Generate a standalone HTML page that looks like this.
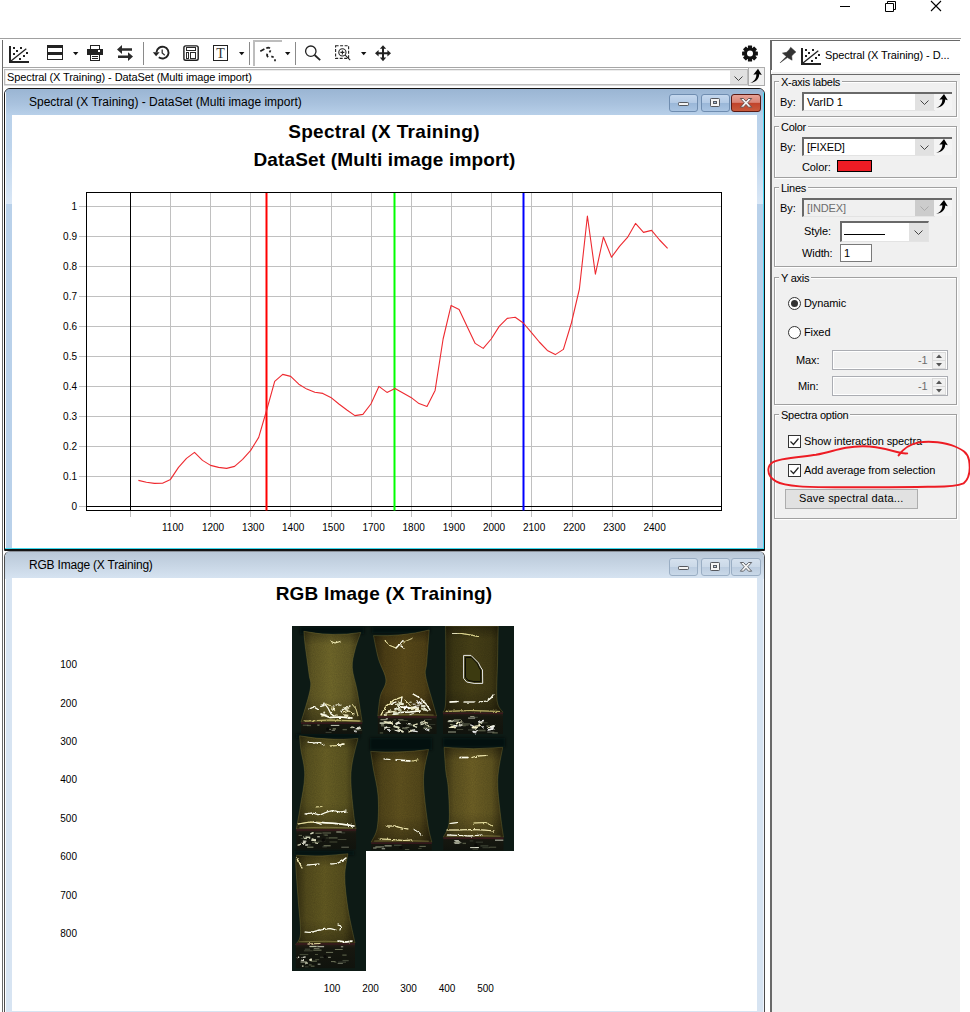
<!DOCTYPE html>
<html lang="en"><head><meta charset="utf-8"><title>Spectral (X Training) - DataSet (Multi image import)</title>
<style>
*{box-sizing:border-box;margin:0;padding:0}
html,body{width:970px;height:1012px;overflow:hidden;background:#fff}
body{position:relative;font-family:"Liberation Sans",sans-serif;font-size:11px;color:#000}
.a{position:absolute}
.t{position:absolute;white-space:nowrap;line-height:12px;font-size:11px;letter-spacing:-0.1px}
.win{position:absolute;left:4px;width:761px;border:1px solid #1c1c1c;border-radius:6px 6px 0 0;overflow:hidden}
.cap{position:absolute;left:0;top:0;right:0;height:27px}
.wt{position:absolute;left:24px;top:6px;font-size:12px;white-space:nowrap;line-height:14px}
.wb{position:absolute;top:5px;width:29px;height:18px;border-radius:3px}
.content{position:absolute;left:7px;top:26px;width:745px;background:#fff}
.grp{position:absolute;left:774px;width:183px;border:1px solid #a0a0a0;box-shadow:1px 1px 0 #fff, inset 1px 1px 0 #fff}
.gl{position:absolute;left:4px;top:-6px;background:#f0f0f0;padding:0 2px;white-space:nowrap;line-height:12px;font-size:11px;letter-spacing:-0.25px}
.cb{position:absolute;border-top:2px solid #696969;border-left:2px solid #696969;border-bottom:1px solid #e3e3e3;border-right:1px solid #e3e3e3;background:#fff}
.cbb{position:absolute;background:#e1e1e1}
.ab{position:absolute;width:18px;background:#f4f4f4}
.sp{position:absolute;left:832px;width:116px;height:20px;border:1px solid #abadb3;background:#f0f0f0;box-shadow:inset 0 0 0 1px #fff}
.chk{position:absolute;left:788px;width:13px;height:13px;border:1px solid #333;background:#fff}
.ct{font-family:"Liberation Sans",sans-serif;font-size:10px;fill:#000}
</style></head><body>
<!-- ===== application frame / window controls ===== -->
<div class="a" style="left:0;top:38px;width:961px;height:1px;background:#a0a0a0"></div>
<div class="a" style="left:2px;top:40px;width:1px;height:972px;background:#696969"></div>
<svg class="a" style="left:830px;top:0" width="130" height="16" viewBox="830 0 130 16">
<path d="M840 6.5h10" stroke="#000" stroke-width="1" fill="none"/>
<path d="M885.5 3.5h8v8h-8zM887.5 3.5v-2h8v8h-2" stroke="#000" stroke-width="1" fill="none"/>
<path d="M931 1l10 10M941 1l-10 10" stroke="#000" stroke-width="1.1" fill="none"/>
</svg>

<!-- ===== toolbar ===== -->
<svg class="a" style="left:0;top:40px" width="770" height="28" viewBox="0 40 770 28" fill="none">
<!-- scatter icon -->
<g fill="#222">
<rect x="9" y="46" width="2" height="17"/><rect x="9" y="61" width="20" height="2"/>
<rect x="13" y="47" width="2" height="2"/><rect x="20" y="47" width="2" height="2"/><rect x="16" y="50" width="2" height="2"/>
<rect x="13" y="53" width="2" height="2"/><rect x="26" y="52" width="2" height="2"/><rect x="23" y="55" width="2" height="2"/><rect x="19" y="58" width="2" height="2"/>
</g>
<path d="M11 61L26.3 48.7" stroke="#222" stroke-width="1.3"/>
<!-- rows icon -->
<rect x="47.5" y="45.5" width="15" height="14" stroke="#222" stroke-width="1"/>
<rect x="47" y="45" width="16" height="3" fill="#222"/><rect x="47" y="52" width="16" height="3" fill="#222"/>
<path d="M73 52h5.4l-2.7 3.2z" fill="#111"/>
<!-- printer -->
<rect x="90.5" y="45.5" width="9" height="5" stroke="#222" fill="#fff"/>
<rect x="87" y="49" width="16" height="6" fill="#222"/><rect x="98" y="50" width="2" height="2" fill="#fff"/>
<rect x="90.5" y="54.5" width="9" height="6" stroke="#222" fill="#fff"/>
<path d="M92 56.5h6M92 58.5h6" stroke="#222" stroke-width="1"/>
<!-- swap -->
<path d="M117 49.400l5-4.400v3.200h10v2.500h-10v3.200z" fill="#2b2b2b"/>
<path d="M133 56.600l-5-4.400v3.200h-10v2.500h10v3.200z" fill="#2b2b2b"/>
<path d="M143.5 42v23" stroke="#8a8a8a"/>
<!-- history -->
<path d="M156.500 52.300a6 5.900 0 1 1 2.300 5" stroke="#222" stroke-width="1.900"/>
<path d="M152.800 52.200h6.800l-3.500 4z" fill="#222"/>
<path d="M162.200 49.400v3.500l2.600 2.300" stroke="#333" stroke-width="1.300"/>
<!-- layout -->
<rect x="183.900" y="45.900" width="14.300" height="14.300" rx="1.800" stroke="#1c1c1c" stroke-width="1.400" fill="#fff"/>
<g shape-rendering="crispEdges" stroke="#2a2a2a" stroke-width="1" fill="#fff"><rect x="186.500" y="47.500" width="9" height="3"/><rect x="186.500" y="52.500" width="2" height="6"/><rect x="190.500" y="52.500" width="5" height="6"/></g>
<!-- T -->
<rect x="213.5" y="45.5" width="14" height="15" stroke="#222"/>
<text x="220.6" y="58" text-anchor="middle" font-family="Liberation Serif, serif" font-size="14" fill="#333">T</text>
<path d="M239 52h5.4l-2.7 3.2z" fill="#111"/>
<path d="M249.5 42v23" stroke="#8a8a8a"/>
<!-- pressed lasso button -->
<path d="M254 66V41h28" stroke="#bdbdbd" stroke-width="2"/>
<path d="M260.300 51.200L264.400 49M266.300 48.400Q268.300 46.900 269.900 48.400M270.600 50.400L269.500 52.400M267.400 53.700Q266.300 55.500 268.200 57M271.300 56.400L273.700 57.300M275 59.300v1.900" stroke="#1e1e1e" stroke-width="1.700" stroke-linecap="butt" fill="none"/>
<path d="M285 52h5.4l-2.7 3.2z" fill="#111"/>
<path d="M295.5 42v23" stroke="#8a8a8a"/>
<!-- magnifier -->
<circle cx="310.8" cy="51.2" r="5.2" stroke="#222" stroke-width="1.3"/>
<path d="M314.6 55l5.6 5.2" stroke="#222" stroke-width="1.8"/>
<!-- zoom rect -->
<rect x="335.6" y="45.8" width="13" height="12.6" stroke="#222" stroke-width="1.1" stroke-dasharray="3 1.5"/>
<circle cx="342.4" cy="52.4" r="3.6" stroke="#222" stroke-width="1.1"/>
<path d="M340.4 52.4h4M342.4 50.4v4M345.2 55.2l5 5" stroke="#222" stroke-width="1.1"/>
<path d="M361 52h5.4l-2.7 3.2z" fill="#111"/>
<!-- move -->
<path d="M383 45.2l3.2 3.6h-2.2v3.4h3.4v-2.2l3.6 3.2l-3.6 3.2v-2.2h-3.4v3.4h2.2l-3.2 3.6l-3.2-3.6h2.2v-3.4h-3.4v2.2l-3.6-3.2l3.6-3.2v2.2h3.4v-3.4h-2.2z" fill="#222"/>
<!-- gear -->
<g transform="translate(750 53.500)">
<circle r="6" fill="#111"/>
<g fill="#111"><rect x="-2.100" y="-7.900" width="4.200" height="15.800" rx="0.500"/><rect x="-2.100" y="-7.900" width="4.200" height="15.800" rx="0.500" transform="rotate(45)"/><rect x="-2.100" y="-7.900" width="4.200" height="15.800" rx="0.500" transform="rotate(90)"/><rect x="-2.100" y="-7.900" width="4.200" height="15.800" rx="0.500" transform="rotate(135)"/></g>
<circle r="3" fill="#fff"/>
</g>
</svg>

<!-- ===== plot selector combo ===== -->
<div class="a" style="left:3px;top:67px;width:762px;height:1px;background:#a6a6a6"></div>
<div class="a" style="left:4px;top:69px;width:744px;height:16px;border:1px solid #bcbcbc;box-shadow:inset 1px 1px 0 #ececec;background:#fff"></div>
<div class="a" style="left:4px;top:85px;width:744px;height:1px;background:#dcdcdc"></div>
<div class="t" style="left:7px;top:71px">Spectral (X Training) - DataSet (Multi image import)</div>
<div class="a" style="left:730px;top:70px;width:17px;height:14px;background:#e1e1e1"></div>
<svg class="a" style="left:730px;top:70px" width="17" height="14" viewBox="0 0 17 14"><path d="M4.500 6.500l4 4l4-4" stroke="#444" stroke-width="1" fill="none"/></svg>
<div class="a" style="left:748px;top:67px;width:17px;height:19px;border:1px solid #adadad;background:#f0f0f0"></div>
<svg class="a" style="left:749px;top:68px" width="14" height="16" viewBox="0 0 14 16"><path d="M1 15c4.500-1.500 6.500-5 6.300-8.800L4.300 6.800L9 .8L12.800 7L10.200 6.300C10.200 11 6.500 14.600 1 15z" fill="#000"/></svg>
<!-- ===== MDI child window 1 (active) ===== -->
<div class="win" style="top:88px;height:463px;background:#b9d1ea;border-color:#151515">
  <div class="cap" style="background:linear-gradient(#9ab5d3,#a9c2de 55%,#b9d1ea)"></div>
  <div class="a" style="left:0;top:3px;width:1px;height:458px;background:#fff"></div>
  <div class="a" style="right:0;top:3px;width:1px;height:456px;background:#46d9f7"></div>
  <div class="a" style="left:1px;top:26px;width:6px;height:89px;background:linear-gradient(#b9d1ea,#bdd4ec 35%,#d9e7f6)"></div>
  <div class="a" style="right:1px;top:26px;width:6px;height:89px;background:linear-gradient(#b9d1ea,#bdd4ec 35%,#d9e7f6)"></div>
  <div class="wt">Spectral (X Training) - DataSet (Multi image import)</div>
  <div class="wb" style="left:664px;border:1px solid #6f8db0;background:linear-gradient(#c5d8ee 0,#b3cae5 48%,#9ab7d8 52%,#a9c4e2 100%)"></div>
  <div class="wb" style="left:696px;border:1px solid #6f8db0;background:linear-gradient(#c5d8ee 0,#b3cae5 48%,#9ab7d8 52%,#a9c4e2 100%)"></div>
  <div class="wb" style="left:726px;width:30px;border:1px solid #5a1a14;background:linear-gradient(#e7a397 0,#d98476 46%,#c1432b 52%,#c85a3c 100%)"></div>
  <svg class="a" style="left:664px;top:5px" width="92" height="18" viewBox="0 0 92 18">
    <rect x="9.500" y="8.500" width="10" height="3" rx="0.8" fill="#f4f4f4" stroke="#55585e" stroke-width="1"/>
    <rect x="41.500" y="4.500" width="9" height="8" rx="0.8" fill="#f4f4f4" stroke="#55585e"/><rect x="44.500" y="7.500" width="3" height="2" fill="#9fb8d6" stroke="#55585e"/>
    <path d="M71.300 4.500h3.200l2.500 2.700l2.500-2.700h3.200l-4 4.300l4 4.400h-3.200l-2.500-2.800l-2.500 2.800h-3.200l4-4.400z" fill="#f8f8f8" stroke="#5b4a48" stroke-width="0.9"/>
  </svg>
  <div class="content" style="height:433px"></div>
  <div class="a" style="left:0;top:459px;width:759px;height:1px;background:#3fd9ee"></div>
  <div class="a" style="left:0;top:460px;width:759px;height:1px;background:#111"></div>
</div>

<!-- ===== MDI child window 2 (inactive) ===== -->
<div class="win" style="top:551px;height:470px;background:#d7e4f2;border-color:#4c4c4c;border-top-color:#8a9099">
  <div class="a" style="left:0;top:3px;width:1px;height:470px;background:#fff"></div>
  <div class="a" style="right:0;top:3px;width:1px;height:470px;background:#eef3fb"></div>
  <div class="cap" style="background:linear-gradient(#b9c8d8,#c9d7e6 55%,#d7e4f2)"></div>
  <div class="wt" style="top:6px;letter-spacing:-0.2px">RGB Image (X Training)</div>
  <div class="wb" style="left:664px;top:6px;border:1px solid #9aaec4;background:linear-gradient(#d5e1ee 0,#cbd9e8 48%,#bccde0 52%,#c9d8e8 100%)"></div>
  <div class="wb" style="left:696px;top:6px;border:1px solid #9aaec4;background:linear-gradient(#d5e1ee 0,#cbd9e8 48%,#bccde0 52%,#c9d8e8 100%)"></div>
  <div class="wb" style="left:726px;top:6px;width:30px;border:1px solid #9aaec4;background:linear-gradient(#d5e1ee 0,#cbd9e8 48%,#bccde0 52%,#c9d8e8 100%)"></div>
  <svg class="a" style="left:664px;top:6px" width="92" height="18" viewBox="0 0 92 18">
    <rect x="9.500" y="8.500" width="10" height="3" rx="0.8" fill="#f4f4f4" stroke="#55585e" stroke-width="1"/>
    <rect x="41.500" y="4.500" width="9" height="8" rx="0.8" fill="#f4f4f4" stroke="#55585e"/><rect x="44.500" y="7.500" width="3" height="2" fill="#c3d2e2" stroke="#55585e"/>
    <path d="M71.300 4.500h3.200l2.500 2.700l2.500-2.700h3.200l-4 4.300l4 4.400h-3.200l-2.500-2.800l-2.500 2.800h-3.200l4-4.400z" fill="#f8f8f8" stroke="#55585e" stroke-width="0.9"/>
  </svg>
  <div class="content" style="top:26px;height:433px"></div>
</div>
<svg class="a" style="left:12px;top:115px" width="745" height="433" viewBox="12 115 745 433">
<g stroke="#c0c0c0" stroke-width="1" shape-rendering="crispEdges">
<path d="M79 206.5H721"/>
<path d="M79 236.5H721"/>
<path d="M79 266.5H721"/>
<path d="M79 296.5H721"/>
<path d="M79 326.5H721"/>
<path d="M79 356.5H721"/>
<path d="M79 386.5H721"/>
<path d="M79 416.5H721"/>
<path d="M79 446.5H721"/>
<path d="M79 476.5H721"/>
<path d="M79 506.5H86"/>
<path d="M170.5 193V517"/>
<path d="M210.5 193V517"/>
<path d="M250.5 193V517"/>
<path d="M290.5 193V517"/>
<path d="M331.5 193V517"/>
<path d="M371.5 193V517"/>
<path d="M411.5 193V517"/>
<path d="M451.5 193V517"/>
<path d="M491.5 193V517"/>
<path d="M531.5 193V517"/>
<path d="M572.5 193V517"/>
<path d="M612.5 193V517"/>
<path d="M652.5 193V517"/>
<path d="M130.5 511V517"/>
</g>
<g stroke="#000" stroke-width="1" fill="none" shape-rendering="crispEdges">
<rect x="86.5" y="192.5" width="635" height="318"/>
<path d="M86 506.5H722M130.5 192V511"/>
</g>
<g stroke-width="2" fill="none"><path d="M266.5 193V510.5" stroke="#ff0000"/><path d="M394.5 193V510.5" stroke="#00ff00"/><path d="M523.5 193V510.5" stroke="#0000ff"/></g>
<polyline points="138.4,480.4 146.4,482.2 154.4,483.4 162.5,483.2 170.5,479.4 178.5,467.4 186.5,458.4 194.5,452.4 202.5,460.4 210.6,465.4 218.6,467.4 226.6,468.4 234.6,466.4 242.6,459.4 250.7,450.4 258.7,437.4 266.7,410.0 274.7,381.4 282.7,374.4 290.7,376.4 298.8,384.2 306.8,389.1 314.8,392.3 322.8,393.4 330.8,397.4 338.9,404.0 346.9,410.0 354.9,415.6 362.9,414.4 370.9,404.0 378.9,386.4 387.0,392.4 395.0,388.4 403.0,393.0 411.0,397.4 419.0,403.6 427.0,406.4 435.1,390.4 443.1,339.0 451.1,305.4 459.1,309.4 467.1,326.6 475.2,343.4 483.2,348.4 491.2,339.0 499.2,326.4 507.2,318.4 515.2,317.2 523.3,323.0 531.3,332.4 539.3,342.0 547.3,350.4 555.3,354.6 563.4,349.4 571.4,323.0 579.4,289.0 587.4,216.0 595.4,274.2 603.4,237.0 611.5,257.2 619.5,246.4 627.5,237.4 635.5,223.4 643.5,232.4 651.6,230.4 659.6,240.0 667.6,248.4" fill="none" stroke="#ee2a30" stroke-width="1.1" stroke-linejoin="round"/>
<text x="384" y="138.4" text-anchor="middle" font-family="Liberation Sans, sans-serif" font-weight="bold" font-size="19" letter-spacing="0.33">Spectral (X Training)</text>
<text x="384.5" y="166" text-anchor="middle" font-family="Liberation Sans, sans-serif" font-weight="bold" font-size="19" letter-spacing="0.16">DataSet (Multi image import)</text>
<text class="ct" x="77" y="210.1" text-anchor="end">1</text>
<text class="ct" x="77" y="240.1" text-anchor="end">0.9</text>
<text class="ct" x="77" y="270.1" text-anchor="end">0.8</text>
<text class="ct" x="77" y="300.1" text-anchor="end">0.7</text>
<text class="ct" x="77" y="330.1" text-anchor="end">0.6</text>
<text class="ct" x="77" y="360.1" text-anchor="end">0.5</text>
<text class="ct" x="77" y="390.1" text-anchor="end">0.4</text>
<text class="ct" x="77" y="420.1" text-anchor="end">0.3</text>
<text class="ct" x="77" y="450.1" text-anchor="end">0.2</text>
<text class="ct" x="77" y="480.1" text-anchor="end">0.1</text>
<text class="ct" x="77" y="510.1" text-anchor="end">0</text>
<text class="ct" x="172.8" y="531" text-anchor="middle">1100</text>
<text class="ct" x="213.0" y="531" text-anchor="middle">1200</text>
<text class="ct" x="253.1" y="531" text-anchor="middle">1300</text>
<text class="ct" x="293.2" y="531" text-anchor="middle">1400</text>
<text class="ct" x="333.4" y="531" text-anchor="middle">1500</text>
<text class="ct" x="373.6" y="531" text-anchor="middle">1700</text>
<text class="ct" x="413.7" y="531" text-anchor="middle">1800</text>
<text class="ct" x="453.9" y="531" text-anchor="middle">1900</text>
<text class="ct" x="494.0" y="531" text-anchor="middle">2000</text>
<text class="ct" x="534.1" y="531" text-anchor="middle">2100</text>
<text class="ct" x="574.3" y="531" text-anchor="middle">2200</text>
<text class="ct" x="614.4" y="531" text-anchor="middle">2300</text>
<text class="ct" x="654.6" y="531" text-anchor="middle">2400</text>
</svg>
<!-- ===== RGB image plot text ===== -->
<svg class="a" style="left:12px;top:578px" width="745" height="433" viewBox="12 578 745 433">
<text x="384" y="600" text-anchor="middle" font-family="Liberation Sans, sans-serif" font-weight="bold" font-size="19" letter-spacing="0.2">RGB Image (X Training)</text>
<text class="ct" x="77" y="668" text-anchor="end">100</text>
<text class="ct" x="77" y="706.500" text-anchor="end">200</text>
<text class="ct" x="77" y="745" text-anchor="end">300</text>
<text class="ct" x="77" y="783.300" text-anchor="end">400</text>
<text class="ct" x="77" y="821.700" text-anchor="end">500</text>
<text class="ct" x="77" y="860.200" text-anchor="end">600</text>
<text class="ct" x="77" y="898.600" text-anchor="end">700</text>
<text class="ct" x="77" y="937" text-anchor="end">800</text>
<text class="ct" x="332" y="991.600" text-anchor="middle">100</text>
<text class="ct" x="370.500" y="991.600" text-anchor="middle">200</text>
<text class="ct" x="408.500" y="991.600" text-anchor="middle">300</text>
<text class="ct" x="447" y="991.600" text-anchor="middle">400</text>
<text class="ct" x="485.500" y="991.600" text-anchor="middle">500</text>
</svg>
<svg class="a" style="left:292px;top:626px" width="222" height="345" viewBox="292 626 222 345">
<defs>
<linearGradient id="ga" x1="0" x2="1" y1="0" y2="0"><stop offset="0" stop-color="#2e2a0e"/><stop offset=".18" stop-color="#514a1b"/><stop offset=".48" stop-color="#625a24"/><stop offset=".8" stop-color="#544d1c"/><stop offset="1" stop-color="#2c280d"/></linearGradient>
<linearGradient id="gb" x1="0" x2="1" y1="0" y2="0"><stop offset="0" stop-color="#2e260c"/><stop offset=".18" stop-color="#4e4116"/><stop offset=".5" stop-color="#5b4c1a"/><stop offset=".82" stop-color="#4c3f15"/><stop offset="1" stop-color="#2b2109"/></linearGradient>
<linearGradient id="gs" x1="0" x2="0" y1="0" y2="1"><stop offset="0" stop-color="#2c2018"/><stop offset=".2" stop-color="#16170f"/><stop offset="1" stop-color="#10130d"/></linearGradient>
<linearGradient id="gv" x1="0" x2="0" y1="0" y2="1"><stop offset="0" stop-color="#000" stop-opacity=".32"/><stop offset=".15" stop-color="#000" stop-opacity="0"/><stop offset=".72" stop-color="#000" stop-opacity="0"/><stop offset=".86" stop-color="#000" stop-opacity=".14"/><stop offset="1" stop-color="#000" stop-opacity=".3"/></linearGradient>
<filter id="nz" x="0" y="0" width="100%" height="100%"><feTurbulence type="fractalNoise" baseFrequency="0.9" numOctaves="2" seed="3" result="n"/><feColorMatrix type="matrix" values="0 0 0 0 0  0 0 0 0 0  0 0 0 0 0  0 0 0 .35 -.05"/><feComposite in2="SourceGraphic" operator="in"/></filter>
<filter id="bl" x="-10%" y="-60%" width="120%" height="220%"><feGaussianBlur stdDeviation="1.6"/></filter>
<filter id="rg" x="0" y="0" width="100%" height="100%"><feTurbulence type="fractalNoise" baseFrequency="0.35" numOctaves="2" seed="5" result="t"/><feDisplacementMap in="SourceGraphic" in2="t" scale="2.6" xChannelSelector="R" yChannelSelector="G" result="d"/><feGaussianBlur in="d" stdDeviation="0.7" result="g0"/><feComponentTransfer in="g0" result="g"><feFuncA type="linear" slope="0.6"/></feComponentTransfer><feMerge><feMergeNode in="g"/><feMergeNode in="d"/></feMerge></filter>
</defs>
<path d="M292 626H514V851H366V971H292z" fill="#0d1a15"/>
<rect x="300" y="627" width="64" height="7" fill="#040907" opacity=".75" filter="url(#bl)"/>
<rect x="372" y="627" width="58" height="6" fill="#040907" opacity=".75" filter="url(#bl)"/>
<rect x="296" y="734" width="64" height="4" fill="#040907" opacity=".75" filter="url(#bl)"/>
<rect x="370" y="738" width="62" height="12" fill="#040907" opacity=".75" filter="url(#bl)"/>
<rect x="443" y="738" width="62" height="9" fill="#040907" opacity=".75" filter="url(#bl)"/>
<rect x="294" y="851" width="60" height="4" fill="#040907" opacity=".75" filter="url(#bl)"/>
<defs><linearGradient id="g0" x1="0" x2="1" y1="0" y2="0"><stop offset="0" stop-color="#393516"/><stop offset=".18" stop-color="#605824"/><stop offset=".48" stop-color="#72692b"/><stop offset=".8" stop-color="#635b26"/><stop offset="1" stop-color="#363114"/></linearGradient><linearGradient id="g1" x1="0" x2="1" y1="0" y2="0"><stop offset="0" stop-color="#2e260d"/><stop offset=".18" stop-color="#4d3f16"/><stop offset=".48" stop-color="#5b4b1a"/><stop offset=".8" stop-color="#504217"/><stop offset="1" stop-color="#2b230c"/></linearGradient><linearGradient id="g2" x1="0" x2="1" y1="0" y2="0"><stop offset="0" stop-color="#25210c"/><stop offset=".18" stop-color="#3d3814"/><stop offset=".48" stop-color="#494218"/><stop offset=".8" stop-color="#403a15"/><stop offset="1" stop-color="#221f0b"/></linearGradient><linearGradient id="g3" x1="0" x2="1" y1="0" y2="0"><stop offset="0" stop-color="#353113"/><stop offset=".18" stop-color="#595220"/><stop offset=".48" stop-color="#6a6126"/><stop offset=".8" stop-color="#5c5521"/><stop offset="1" stop-color="#322e12"/></linearGradient><linearGradient id="g4" x1="0" x2="1" y1="0" y2="0"><stop offset="0" stop-color="#312a0f"/><stop offset=".18" stop-color="#52461a"/><stop offset=".48" stop-color="#61531f"/><stop offset=".8" stop-color="#55491b"/><stop offset="1" stop-color="#2e270f"/></linearGradient><linearGradient id="g5" x1="0" x2="1" y1="0" y2="0"><stop offset="0" stop-color="#373113"/><stop offset=".18" stop-color="#5d5220"/><stop offset=".48" stop-color="#6f6126"/><stop offset=".8" stop-color="#605521"/><stop offset="1" stop-color="#342e12"/></linearGradient><linearGradient id="g6" x1="0" x2="1" y1="0" y2="0"><stop offset="0" stop-color="#322d11"/><stop offset=".18" stop-color="#544c1d"/><stop offset=".48" stop-color="#635a22"/><stop offset=".8" stop-color="#574f1e"/><stop offset="1" stop-color="#2f2a10"/></linearGradient></defs>
<path d="M303.8 631.3Q332.2 636.9 360.7 632.5C359.8 635.4 356.4 644.1 355.0 650.0C353.6 655.9 351.9 660.9 352.3 667.8C352.7 674.7 355.7 682.2 357.3 691.3C358.9 700.4 361.4 717.1 362.2 722.2L301.0 722.2C302.6 716.6 309.0 696.8 310.3 688.8C311.6 680.8 309.8 681.0 309.0 674.0C308.2 667.0 306.2 653.8 305.3 646.7C304.4 639.6 304.1 633.9 303.8 631.3z" fill="url(#g0)"/>
<path d="M303.8 631.3Q332.2 636.9 360.7 632.5C359.8 635.4 356.4 644.1 355.0 650.0C353.6 655.9 351.9 660.9 352.3 667.8C352.7 674.7 355.7 682.2 357.3 691.3C358.9 700.4 361.4 717.1 362.2 722.2L301.0 722.2C302.6 716.6 309.0 696.8 310.3 688.8C311.6 680.8 309.8 681.0 309.0 674.0C308.2 667.0 306.2 653.8 305.3 646.7C304.4 639.6 304.1 633.9 303.8 631.3z" fill="url(#gv)"/>
<path d="M303.8 631.3Q332.2 636.9 360.7 632.5C359.8 635.4 356.4 644.1 355.0 650.0C353.6 655.9 351.9 660.9 352.3 667.8C352.7 674.7 355.7 682.2 357.3 691.3C358.9 700.4 361.4 717.1 362.2 722.2L301.0 722.2C302.6 716.6 309.0 696.8 310.3 688.8C311.6 680.8 309.8 681.0 309.0 674.0C308.2 667.0 306.2 653.8 305.3 646.7C304.4 639.6 304.1 633.9 303.8 631.3z" fill="#000" filter="url(#nz)" opacity=".5"/>
<path d="M303.8 631.3Q332.2 636.9 360.7 632.5C359.8 635.4 356.4 644.1 355.0 650.0C353.6 655.9 351.9 660.9 352.3 667.8C352.7 674.7 355.7 682.2 357.3 691.3C358.9 700.4 361.4 717.1 362.2 722.2L301.0 722.2C302.6 716.6 309.0 696.8 310.3 688.8C311.6 680.8 309.8 681.0 309.0 674.0C308.2 667.0 306.2 653.8 305.3 646.7C304.4 639.6 304.1 633.9 303.8 631.3z" fill="none" stroke="#8f8540" stroke-width="0.7" opacity=".45"/>
<rect x="301.0" y="722.2" width="61.2" height="11.8" fill="url(#gs)"/>
<path d="M301.0 723.2H362.2" stroke="#4a1622" stroke-width="0.9" opacity=".9"/>
<path d="M325.6 732.4h5.9" stroke="#4a5040" stroke-width="1" opacity="0.73"/>
<path d="M332.7 728.9h3.3" stroke="#8a9070" stroke-width="1.3" opacity="0.86"/>
<path d="M306.9 725.5h4.1" stroke="#8a9070" stroke-width="1.3" opacity="0.52"/>
<path d="M353.3 730.1h8.8" stroke="#5a6048" stroke-width="1.3" opacity="0.57"/>
<path d="M302.8 725.2h5.7" stroke="#7e8468" stroke-width="0.8" opacity="0.77"/>
<path d="M342.6 729.6h4.3" stroke="#7e8468" stroke-width="1.3" opacity="0.61"/>
<path d="M317.4 725.4h2.0" stroke="#8a9070" stroke-width="1" opacity="0.68"/>
<path d="M330.8 725.4h8.5" stroke="#e8ead8" stroke-width="1" opacity="0.84"/>
<path d="M328.8 729.4h2.2" stroke="#c8ccb0" stroke-width="1" opacity="0.55"/>
<path d="M317.2 724.8h2.5" stroke="#8a9070" stroke-width="0.8" opacity="0.60"/>
<path d="M350.4 727.8h2.4" stroke="#8a9070" stroke-width="1" opacity="0.69"/>
<path d="M331.6 730.3h3.4" stroke="#e8ead8" stroke-width="0.8" opacity="0.64"/>
<circle cx="327.7" cy="729.1" r="1.6" fill="#0a0a08"/>
<path d="M304.0 721.0Q331.6 719.8 359.2 721.2" stroke="#cfc678" stroke-width="0.8" fill="none" opacity=".45"/>
<path d="M373.5 635.6Q401.4 636.8 429.2 630.0C428.8 635.5 427.3 655.3 426.7 662.8C426.1 670.3 424.7 669.2 425.5 675.2C426.3 681.2 429.8 691.9 431.7 698.7C433.6 705.5 435.8 713.1 436.6 716.0L377.8 716.0C378.2 712.7 379.0 702.2 380.3 696.2C381.6 690.2 386.2 686.2 385.9 680.0C385.6 673.8 380.6 666.4 378.5 659.0C376.4 651.6 374.3 639.5 373.5 635.6z" fill="url(#g1)"/>
<path d="M373.5 635.6Q401.4 636.8 429.2 630.0C428.8 635.5 427.3 655.3 426.7 662.8C426.1 670.3 424.7 669.2 425.5 675.2C426.3 681.2 429.8 691.9 431.7 698.7C433.6 705.5 435.8 713.1 436.6 716.0L377.8 716.0C378.2 712.7 379.0 702.2 380.3 696.2C381.6 690.2 386.2 686.2 385.9 680.0C385.6 673.8 380.6 666.4 378.5 659.0C376.4 651.6 374.3 639.5 373.5 635.6z" fill="url(#gv)"/>
<path d="M373.5 635.6Q401.4 636.8 429.2 630.0C428.8 635.5 427.3 655.3 426.7 662.8C426.1 670.3 424.7 669.2 425.5 675.2C426.3 681.2 429.8 691.9 431.7 698.7C433.6 705.5 435.8 713.1 436.6 716.0L377.8 716.0C378.2 712.7 379.0 702.2 380.3 696.2C381.6 690.2 386.2 686.2 385.9 680.0C385.6 673.8 380.6 666.4 378.5 659.0C376.4 651.6 374.3 639.5 373.5 635.6z" fill="#000" filter="url(#nz)" opacity=".5"/>
<path d="M373.5 635.6Q401.4 636.8 429.2 630.0C428.8 635.5 427.3 655.3 426.7 662.8C426.1 670.3 424.7 669.2 425.5 675.2C426.3 681.2 429.8 691.9 431.7 698.7C433.6 705.5 435.8 713.1 436.6 716.0L377.8 716.0C378.2 712.7 379.0 702.2 380.3 696.2C381.6 690.2 386.2 686.2 385.9 680.0C385.6 673.8 380.6 666.4 378.5 659.0C376.4 651.6 374.3 639.5 373.5 635.6z" fill="none" stroke="#8f8540" stroke-width="0.7" opacity=".45"/>
<rect x="377.8" y="716.0" width="58.8" height="18.0" fill="url(#gs)"/>
<path d="M377.8 717.0H436.6" stroke="#4a1622" stroke-width="0.9" opacity=".9"/>
<path d="M399.2 720.5h8.5" stroke="#8a9070" stroke-width="0.8" opacity="0.50"/>
<path d="M402.0 728.4h5.4" stroke="#7e8468" stroke-width="1" opacity="0.73"/>
<path d="M427.9 724.6h7.4" stroke="#4a5040" stroke-width="0.8" opacity="0.68"/>
<path d="M428.1 731.0h2.0" stroke="#5a6048" stroke-width="1" opacity="0.95"/>
<path d="M379.8 732.9h3.3" stroke="#5a6048" stroke-width="1.3" opacity="0.76"/>
<path d="M380.9 724.9h3.0" stroke="#c8ccb0" stroke-width="1.3" opacity="0.65"/>
<path d="M393.6 719.8h2.5" stroke="#5a6048" stroke-width="1.3" opacity="0.61"/>
<path d="M408.7 725.1h4.6" stroke="#5a6048" stroke-width="1" opacity="0.87"/>
<path d="M385.6 727.6h4.7" stroke="#e8ead8" stroke-width="0.8" opacity="0.87"/>
<path d="M391.2 729.2h3.3" stroke="#5a6048" stroke-width="0.8" opacity="0.81"/>
<path d="M398.1 719.6h5.4" stroke="#c8ccb0" stroke-width="0.8" opacity="0.55"/>
<path d="M404.3 729.2h3.8" stroke="#4a5040" stroke-width="1" opacity="0.69"/>
<path d="M423.9 726.0h5.4" stroke="#8a9070" stroke-width="0.8" opacity="0.56"/>
<path d="M402.7 727.4h6.6" stroke="#c8ccb0" stroke-width="1" opacity="0.60"/>
<path d="M424.4 719.5h7.2" stroke="#4a5040" stroke-width="1" opacity="0.61"/>
<path d="M381.1 726.2h4.0" stroke="#7e8468" stroke-width="0.8" opacity="0.66"/>
<path d="M423.2 728.0h8.9" stroke="#8a9070" stroke-width="1.3" opacity="0.76"/>
<path d="M385.8 718.8h2.2" stroke="#e8ead8" stroke-width="1.3" opacity="0.64"/>
<path d="M380.5 719.6h6.2" stroke="#c8ccb0" stroke-width="1.3" opacity="0.64"/>
<circle cx="404.3" cy="726.0" r="1.6" fill="#0a0a08"/>
<path d="M380.8 714.8Q407.2 713.6 433.6 715.0" stroke="#cfc678" stroke-width="0.8" fill="none" opacity=".45"/>
<path d="M445.6 626.0Q471.9 626.0 498.2 626.0C498.1 631.7 497.8 647.7 497.6 660.0C497.4 672.3 496.1 691.3 497.0 700.0C497.9 708.7 502.0 710.2 503.0 712.3L443.0 712.3C443.4 710.8 445.1 711.7 445.6 703.0C446.1 694.3 445.8 672.8 445.8 660.0C445.8 647.2 445.6 631.7 445.6 626.0z" fill="url(#g2)"/>
<path d="M445.6 626.0Q471.9 626.0 498.2 626.0C498.1 631.7 497.8 647.7 497.6 660.0C497.4 672.3 496.1 691.3 497.0 700.0C497.9 708.7 502.0 710.2 503.0 712.3L443.0 712.3C443.4 710.8 445.1 711.7 445.6 703.0C446.1 694.3 445.8 672.8 445.8 660.0C445.8 647.2 445.6 631.7 445.6 626.0z" fill="url(#gv)"/>
<path d="M445.6 626.0Q471.9 626.0 498.2 626.0C498.1 631.7 497.8 647.7 497.6 660.0C497.4 672.3 496.1 691.3 497.0 700.0C497.9 708.7 502.0 710.2 503.0 712.3L443.0 712.3C443.4 710.8 445.1 711.7 445.6 703.0C446.1 694.3 445.8 672.8 445.8 660.0C445.8 647.2 445.6 631.7 445.6 626.0z" fill="#000" filter="url(#nz)" opacity=".5"/>
<path d="M445.6 626.0Q471.9 626.0 498.2 626.0C498.1 631.7 497.8 647.7 497.6 660.0C497.4 672.3 496.1 691.3 497.0 700.0C497.9 708.7 502.0 710.2 503.0 712.3L443.0 712.3C443.4 710.8 445.1 711.7 445.6 703.0C446.1 694.3 445.8 672.8 445.8 660.0C445.8 647.2 445.6 631.7 445.6 626.0z" fill="none" stroke="#8f8540" stroke-width="0.7" opacity=".45"/>
<rect x="443.0" y="712.3" width="60.0" height="21.7" fill="url(#gs)"/>
<path d="M443.0 713.3H503.0" stroke="#4a1622" stroke-width="0.9" opacity=".9"/>
<path d="M447.7 721.5h5.2" stroke="#c8ccb0" stroke-width="1.3" opacity="0.83"/>
<path d="M450.6 721.0h8.7" stroke="#c8ccb0" stroke-width="1.3" opacity="0.71"/>
<path d="M448.0 732.0h8.0" stroke="#c8ccb0" stroke-width="1" opacity="0.76"/>
<path d="M475.9 725.4h4.7" stroke="#5a6048" stroke-width="0.8" opacity="0.54"/>
<path d="M476.6 730.8h9.0" stroke="#8a9070" stroke-width="1" opacity="0.67"/>
<path d="M481.5 722.8h6.1" stroke="#5a6048" stroke-width="0.8" opacity="0.73"/>
<path d="M470.2 716.4h4.2" stroke="#c8ccb0" stroke-width="0.8" opacity="0.93"/>
<path d="M449.8 726.8h7.5" stroke="#4a5040" stroke-width="1" opacity="0.90"/>
<path d="M462.8 725.9h3.0" stroke="#5a6048" stroke-width="0.8" opacity="0.84"/>
<path d="M461.5 723.9h8.5" stroke="#7e8468" stroke-width="1" opacity="0.68"/>
<path d="M456.8 729.4h6.4" stroke="#7e8468" stroke-width="0.8" opacity="0.67"/>
<path d="M473.7 717.3h4.2" stroke="#4a5040" stroke-width="1" opacity="0.88"/>
<path d="M487.3 732.1h7.0" stroke="#e8ead8" stroke-width="0.8" opacity="0.55"/>
<path d="M468.0 729.9h8.5" stroke="#4a5040" stroke-width="1.3" opacity="0.73"/>
<path d="M478.3 730.1h7.0" stroke="#5a6048" stroke-width="1" opacity="0.64"/>
<path d="M486.3 725.9h3.9" stroke="#8a9070" stroke-width="1.3" opacity="0.63"/>
<path d="M462.1 725.1h6.5" stroke="#8a9070" stroke-width="0.8" opacity="0.68"/>
<path d="M453.7 719.6h7.4" stroke="#7e8468" stroke-width="0.8" opacity="0.94"/>
<path d="M449.9 724.5h2.8" stroke="#8a9070" stroke-width="1" opacity="0.93"/>
<path d="M478.9 723.4h3.4" stroke="#7e8468" stroke-width="1.3" opacity="0.50"/>
<path d="M468.1 718.1h7.0" stroke="#e8ead8" stroke-width="1" opacity="0.74"/>
<path d="M492.3 732.9h5.5" stroke="#7e8468" stroke-width="1" opacity="0.88"/>
<path d="M479.7 722.3h3.6" stroke="#8a9070" stroke-width="1" opacity="0.56"/>
<circle cx="472.6" cy="724.1" r="1.6" fill="#0a0a08"/>
<path d="M446.0 711.1Q473.0 709.9 500.0 711.3" stroke="#cfc678" stroke-width="0.8" fill="none" opacity=".45"/>
<path d="M299.6 735.8Q328.8 741.1 358.0 738.4C356.8 744.1 351.8 760.1 351.0 772.4C350.2 784.7 352.6 802.8 353.5 812.2C354.4 821.6 355.7 826.2 356.1 829.0L296.4 829.0C297.0 825.3 298.8 816.0 300.2 807.0C301.6 798.0 304.6 784.6 304.7 775.0C304.8 765.4 301.6 755.8 300.8 749.3C300.0 742.8 299.8 738.0 299.6 735.8z" fill="url(#g3)"/>
<path d="M299.6 735.8Q328.8 741.1 358.0 738.4C356.8 744.1 351.8 760.1 351.0 772.4C350.2 784.7 352.6 802.8 353.5 812.2C354.4 821.6 355.7 826.2 356.1 829.0L296.4 829.0C297.0 825.3 298.8 816.0 300.2 807.0C301.6 798.0 304.6 784.6 304.7 775.0C304.8 765.4 301.6 755.8 300.8 749.3C300.0 742.8 299.8 738.0 299.6 735.8z" fill="url(#gv)"/>
<path d="M299.6 735.8Q328.8 741.1 358.0 738.4C356.8 744.1 351.8 760.1 351.0 772.4C350.2 784.7 352.6 802.8 353.5 812.2C354.4 821.6 355.7 826.2 356.1 829.0L296.4 829.0C297.0 825.3 298.8 816.0 300.2 807.0C301.6 798.0 304.6 784.6 304.7 775.0C304.8 765.4 301.6 755.8 300.8 749.3C300.0 742.8 299.8 738.0 299.6 735.8z" fill="#000" filter="url(#nz)" opacity=".5"/>
<path d="M299.6 735.8Q328.8 741.1 358.0 738.4C356.8 744.1 351.8 760.1 351.0 772.4C350.2 784.7 352.6 802.8 353.5 812.2C354.4 821.6 355.7 826.2 356.1 829.0L296.4 829.0C297.0 825.3 298.8 816.0 300.2 807.0C301.6 798.0 304.6 784.6 304.7 775.0C304.8 765.4 301.6 755.8 300.8 749.3C300.0 742.8 299.8 738.0 299.6 735.8z" fill="none" stroke="#8f8540" stroke-width="0.7" opacity=".45"/>
<rect x="296.4" y="829.0" width="59.7" height="20.5" fill="url(#gs)"/>
<path d="M296.4 830.0H356.1" stroke="#4a1622" stroke-width="0.9" opacity=".9"/>
<path d="M329.1 837.9h8.4" stroke="#5a6048" stroke-width="1.3" opacity="0.90"/>
<path d="M337.8 839.4h8.6" stroke="#8a9070" stroke-width="0.8" opacity="0.54"/>
<path d="M341.3 847.2h7.6" stroke="#c8ccb0" stroke-width="0.8" opacity="0.61"/>
<path d="M317.2 836.8h2.6" stroke="#e8ead8" stroke-width="1" opacity="0.91"/>
<path d="M340.8 832.9h4.4" stroke="#4a5040" stroke-width="1" opacity="0.75"/>
<path d="M336.3 832.0h5.4" stroke="#c8ccb0" stroke-width="1" opacity="0.86"/>
<path d="M306.2 844.9h4.3" stroke="#7e8468" stroke-width="1" opacity="0.57"/>
<path d="M323.6 845.8h7.1" stroke="#8a9070" stroke-width="1" opacity="0.93"/>
<path d="M322.4 833.0h8.6" stroke="#7e8468" stroke-width="1" opacity="0.74"/>
<path d="M312.1 842.4h7.1" stroke="#5a6048" stroke-width="1.3" opacity="0.88"/>
<path d="M325.8 838.0h4.2" stroke="#5a6048" stroke-width="0.8" opacity="0.64"/>
<path d="M304.6 836.1h5.8" stroke="#4a5040" stroke-width="0.8" opacity="0.68"/>
<path d="M303.2 837.9h2.0" stroke="#5a6048" stroke-width="0.8" opacity="0.73"/>
<path d="M317.7 841.1h7.6" stroke="#4a5040" stroke-width="0.8" opacity="0.81"/>
<path d="M300.7 838.5h5.8" stroke="#4a5040" stroke-width="1" opacity="0.61"/>
<path d="M322.4 846.8h4.4" stroke="#4a5040" stroke-width="1.3" opacity="0.64"/>
<path d="M307.1 847.2h6.3" stroke="#7e8468" stroke-width="1.3" opacity="0.85"/>
<path d="M298.6 835.4h3.4" stroke="#8a9070" stroke-width="1" opacity="0.64"/>
<path d="M315.4 833.3h6.3" stroke="#8a9070" stroke-width="1.3" opacity="0.56"/>
<path d="M323.3 834.9h3.8" stroke="#5a6048" stroke-width="1" opacity="0.51"/>
<path d="M329.5 842.0h7.8" stroke="#5a6048" stroke-width="0.8" opacity="0.89"/>
<path d="M324.5 835.2h3.5" stroke="#5a6048" stroke-width="1.3" opacity="0.76"/>
<circle cx="323.3" cy="840.2" r="1.6" fill="#0a0a08"/>
<path d="M299.4 827.8Q326.2 826.6 353.1 828.0" stroke="#cfc678" stroke-width="0.8" fill="none" opacity=".45"/>
<path d="M370.7 751.4Q399.6 753.5 428.5 749.5C427.7 754.5 423.6 767.4 423.5 779.5C423.4 791.6 426.2 811.9 427.6 822.4C429.0 832.9 431.1 838.9 431.8 842.2L371.2 842.2C372.2 839.7 376.1 835.0 377.3 827.3C378.5 819.6 378.8 805.9 378.1 796.0C377.4 786.1 374.4 775.4 373.2 768.0C372.0 760.6 371.1 754.2 370.7 751.4z" fill="url(#g4)"/>
<path d="M370.7 751.4Q399.6 753.5 428.5 749.5C427.7 754.5 423.6 767.4 423.5 779.5C423.4 791.6 426.2 811.9 427.6 822.4C429.0 832.9 431.1 838.9 431.8 842.2L371.2 842.2C372.2 839.7 376.1 835.0 377.3 827.3C378.5 819.6 378.8 805.9 378.1 796.0C377.4 786.1 374.4 775.4 373.2 768.0C372.0 760.6 371.1 754.2 370.7 751.4z" fill="url(#gv)"/>
<path d="M370.7 751.4Q399.6 753.5 428.5 749.5C427.7 754.5 423.6 767.4 423.5 779.5C423.4 791.6 426.2 811.9 427.6 822.4C429.0 832.9 431.1 838.9 431.8 842.2L371.2 842.2C372.2 839.7 376.1 835.0 377.3 827.3C378.5 819.6 378.8 805.9 378.1 796.0C377.4 786.1 374.4 775.4 373.2 768.0C372.0 760.6 371.1 754.2 370.7 751.4z" fill="#000" filter="url(#nz)" opacity=".5"/>
<path d="M370.7 751.4Q399.6 753.5 428.5 749.5C427.7 754.5 423.6 767.4 423.5 779.5C423.4 791.6 426.2 811.9 427.6 822.4C429.0 832.9 431.1 838.9 431.8 842.2L371.2 842.2C372.2 839.7 376.1 835.0 377.3 827.3C378.5 819.6 378.8 805.9 378.1 796.0C377.4 786.1 374.4 775.4 373.2 768.0C372.0 760.6 371.1 754.2 370.7 751.4z" fill="none" stroke="#8f8540" stroke-width="0.7" opacity=".45"/>
<rect x="371.2" y="842.2" width="60.6" height="8.3" fill="url(#gs)"/>
<path d="M371.2 843.2H431.8" stroke="#4a1622" stroke-width="0.9" opacity=".9"/>
<path d="M419.4 846.4h6.4" stroke="#7e8468" stroke-width="1" opacity="0.77"/>
<path d="M418.2 848.4h3.4" stroke="#7e8468" stroke-width="0.8" opacity="0.56"/>
<path d="M384.6 845.9h7.1" stroke="#c8ccb0" stroke-width="1" opacity="0.87"/>
<path d="M394.0 845.3h7.5" stroke="#4a5040" stroke-width="1.3" opacity="0.81"/>
<path d="M373.1 848.0h3.4" stroke="#e8ead8" stroke-width="0.8" opacity="0.82"/>
<path d="M404.9 849.5h4.4" stroke="#7e8468" stroke-width="0.8" opacity="0.72"/>
<path d="M373.5 847.6h7.3" stroke="#5a6048" stroke-width="1" opacity="0.57"/>
<path d="M381.7 848.7h3.4" stroke="#e8ead8" stroke-width="1.3" opacity="0.54"/>
<path d="M375.4 846.9h8.7" stroke="#c8ccb0" stroke-width="1" opacity="0.68"/>
<circle cx="400.9" cy="847.4" r="1.6" fill="#0a0a08"/>
<path d="M374.2 841.0Q401.5 839.8 428.8 841.2" stroke="#cfc678" stroke-width="0.8" fill="none" opacity=".45"/>
<path d="M444.1 747.3Q473.4 750.3 502.7 747.3C501.9 752.7 498.1 768.6 497.7 779.5C497.3 790.4 499.2 802.9 500.2 812.5C501.2 822.1 502.9 833.1 503.5 837.2L443.3 837.2C444.3 834.7 448.3 830.6 449.1 822.4C449.9 814.1 448.8 796.2 448.2 787.7C447.6 779.2 446.5 777.9 445.8 771.2C445.1 764.5 444.4 751.3 444.1 747.3z" fill="url(#g5)"/>
<path d="M444.1 747.3Q473.4 750.3 502.7 747.3C501.9 752.7 498.1 768.6 497.7 779.5C497.3 790.4 499.2 802.9 500.2 812.5C501.2 822.1 502.9 833.1 503.5 837.2L443.3 837.2C444.3 834.7 448.3 830.6 449.1 822.4C449.9 814.1 448.8 796.2 448.2 787.7C447.6 779.2 446.5 777.9 445.8 771.2C445.1 764.5 444.4 751.3 444.1 747.3z" fill="url(#gv)"/>
<path d="M444.1 747.3Q473.4 750.3 502.7 747.3C501.9 752.7 498.1 768.6 497.7 779.5C497.3 790.4 499.2 802.9 500.2 812.5C501.2 822.1 502.9 833.1 503.5 837.2L443.3 837.2C444.3 834.7 448.3 830.6 449.1 822.4C449.9 814.1 448.8 796.2 448.2 787.7C447.6 779.2 446.5 777.9 445.8 771.2C445.1 764.5 444.4 751.3 444.1 747.3z" fill="#000" filter="url(#nz)" opacity=".5"/>
<path d="M444.1 747.3Q473.4 750.3 502.7 747.3C501.9 752.7 498.1 768.6 497.7 779.5C497.3 790.4 499.2 802.9 500.2 812.5C501.2 822.1 502.9 833.1 503.5 837.2L443.3 837.2C444.3 834.7 448.3 830.6 449.1 822.4C449.9 814.1 448.8 796.2 448.2 787.7C447.6 779.2 446.5 777.9 445.8 771.2C445.1 764.5 444.4 751.3 444.1 747.3z" fill="none" stroke="#8f8540" stroke-width="0.7" opacity=".45"/>
<rect x="443.3" y="837.2" width="60.2" height="13.3" fill="url(#gs)"/>
<path d="M443.3 838.2H503.5" stroke="#4a1622" stroke-width="0.9" opacity=".9"/>
<path d="M462.5 843.4h3.5" stroke="#8a9070" stroke-width="1.3" opacity="0.52"/>
<path d="M454.6 843.2h4.9" stroke="#e8ead8" stroke-width="1" opacity="0.91"/>
<path d="M475.3 847.5h2.7" stroke="#e8ead8" stroke-width="0.8" opacity="0.86"/>
<path d="M480.4 845.9h8.0" stroke="#4a5040" stroke-width="1.3" opacity="0.77"/>
<path d="M470.1 847.6h8.9" stroke="#e8ead8" stroke-width="1" opacity="0.91"/>
<path d="M482.4 847.7h7.4" stroke="#4a5040" stroke-width="0.8" opacity="0.90"/>
<path d="M489.3 847.2h6.9" stroke="#7e8468" stroke-width="1" opacity="0.59"/>
<path d="M453.8 842.7h7.6" stroke="#c8ccb0" stroke-width="0.8" opacity="0.90"/>
<path d="M495.0 840.2h8.3" stroke="#e8ead8" stroke-width="1.3" opacity="0.63"/>
<path d="M455.4 841.5h4.8" stroke="#c8ccb0" stroke-width="1" opacity="0.73"/>
<path d="M469.8 840.9h3.5" stroke="#4a5040" stroke-width="1.3" opacity="0.51"/>
<path d="M475.8 842.2h7.2" stroke="#4a5040" stroke-width="1.3" opacity="0.52"/>
<path d="M454.3 840.7h4.6" stroke="#e8ead8" stroke-width="1" opacity="0.91"/>
<path d="M472.5 849.2h5.6" stroke="#5a6048" stroke-width="0.8" opacity="0.79"/>
<circle cx="475.9" cy="844.9" r="1.6" fill="#0a0a08"/>
<path d="M446.3 836.0Q473.4 834.8 500.5 836.2" stroke="#cfc678" stroke-width="0.8" fill="none" opacity=".45"/>
<path d="M296.6 855.3Q322.2 857.5 347.9 853.7C347.4 857.5 344.8 867.5 344.8 876.6C344.8 885.7 346.2 897.1 347.9 908.2C349.6 919.3 353.8 937.2 355.0 943.0L295.8 944.5C296.6 942.7 300.1 940.9 300.5 933.5C300.9 926.1 299.0 911.6 298.2 900.3C297.4 889.0 296.1 873.0 295.8 865.5C295.5 858.0 296.5 857.0 296.6 855.3z" fill="url(#g6)"/>
<path d="M296.6 855.3Q322.2 857.5 347.9 853.7C347.4 857.5 344.8 867.5 344.8 876.6C344.8 885.7 346.2 897.1 347.9 908.2C349.6 919.3 353.8 937.2 355.0 943.0L295.8 944.5C296.6 942.7 300.1 940.9 300.5 933.5C300.9 926.1 299.0 911.6 298.2 900.3C297.4 889.0 296.1 873.0 295.8 865.5C295.5 858.0 296.5 857.0 296.6 855.3z" fill="url(#gv)"/>
<path d="M296.6 855.3Q322.2 857.5 347.9 853.7C347.4 857.5 344.8 867.5 344.8 876.6C344.8 885.7 346.2 897.1 347.9 908.2C349.6 919.3 353.8 937.2 355.0 943.0L295.8 944.5C296.6 942.7 300.1 940.9 300.5 933.5C300.9 926.1 299.0 911.6 298.2 900.3C297.4 889.0 296.1 873.0 295.8 865.5C295.5 858.0 296.5 857.0 296.6 855.3z" fill="#000" filter="url(#nz)" opacity=".5"/>
<path d="M296.6 855.3Q322.2 857.5 347.9 853.7C347.4 857.5 344.8 867.5 344.8 876.6C344.8 885.7 346.2 897.1 347.9 908.2C349.6 919.3 353.8 937.2 355.0 943.0L295.8 944.5C296.6 942.7 300.1 940.9 300.5 933.5C300.9 926.1 299.0 911.6 298.2 900.3C297.4 889.0 296.1 873.0 295.8 865.5C295.5 858.0 296.5 857.0 296.6 855.3z" fill="none" stroke="#8f8540" stroke-width="0.7" opacity=".45"/>
<rect x="295.8" y="943.0" width="59.2" height="25.2" fill="url(#gs)"/>
<path d="M295.8 944.0H355.0" stroke="#4a1622" stroke-width="0.9" opacity=".9"/>
<path d="M300.6 962.0h6.2" stroke="#c8ccb0" stroke-width="1" opacity="0.92"/>
<path d="M304.8 949.2h5.3" stroke="#4a5040" stroke-width="1.3" opacity="0.78"/>
<path d="M299.7 954.6h8.6" stroke="#5a6048" stroke-width="1" opacity="0.77"/>
<path d="M315.2 959.7h4.0" stroke="#5a6048" stroke-width="1" opacity="0.80"/>
<path d="M334.3 962.3h2.2" stroke="#5a6048" stroke-width="0.8" opacity="0.78"/>
<path d="M317.3 946.6h6.8" stroke="#e8ead8" stroke-width="1.3" opacity="0.68"/>
<path d="M326.0 952.4h7.1" stroke="#7e8468" stroke-width="1" opacity="0.82"/>
<path d="M309.4 946.5h7.3" stroke="#c8ccb0" stroke-width="1.3" opacity="0.91"/>
<path d="M304.0 950.8h8.7" stroke="#8a9070" stroke-width="0.8" opacity="0.52"/>
<path d="M317.7 964.2h2.8" stroke="#e8ead8" stroke-width="1.3" opacity="0.57"/>
<path d="M315.0 954.5h3.0" stroke="#5a6048" stroke-width="1" opacity="0.79"/>
<path d="M331.0 961.6h4.5" stroke="#7e8468" stroke-width="1" opacity="0.83"/>
<path d="M308.8 964.9h2.8" stroke="#5a6048" stroke-width="1.3" opacity="0.88"/>
<path d="M310.6 961.2h6.3" stroke="#8a9070" stroke-width="1.3" opacity="0.59"/>
<path d="M310.8 966.2h3.7" stroke="#5a6048" stroke-width="1.3" opacity="0.91"/>
<path d="M340.9 946.8h2.3" stroke="#e8ead8" stroke-width="1" opacity="0.69"/>
<path d="M328.1 957.3h2.7" stroke="#c8ccb0" stroke-width="0.8" opacity="0.91"/>
<path d="M304.9 966.8h3.6" stroke="#4a5040" stroke-width="1" opacity="0.66"/>
<path d="M313.8 948.4h5.5" stroke="#c8ccb0" stroke-width="0.8" opacity="0.70"/>
<path d="M338.1 962.2h7.9" stroke="#4a5040" stroke-width="1" opacity="0.84"/>
<path d="M316.4 948.8h3.1" stroke="#5a6048" stroke-width="1" opacity="0.63"/>
<path d="M334.9 949.5h7.8" stroke="#8a9070" stroke-width="1" opacity="0.76"/>
<path d="M320.0 957.3h4.3" stroke="#4a5040" stroke-width="1.3" opacity="0.76"/>
<path d="M337.7 963.4h5.2" stroke="#c8ccb0" stroke-width="0.8" opacity="0.64"/>
<path d="M342.5 960.6h6.2" stroke="#4a5040" stroke-width="1.3" opacity="0.84"/>
<path d="M313.3 950.2h8.2" stroke="#8a9070" stroke-width="1.3" opacity="0.65"/>
<path d="M342.3 955.1h4.3" stroke="#5a6048" stroke-width="1.3" opacity="0.91"/>
<circle cx="324.9" cy="956.6" r="1.6" fill="#0a0a08"/>
<path d="M298.8 941.8Q325.4 940.6 352.0 942.0" stroke="#cfc678" stroke-width="0.8" fill="none" opacity=".45"/>
<g filter="url(#rg)">
<path d="M331.0 641.5L335.0 643.0L340.0 641.5" stroke="#f4efb8" stroke-width="0.94" fill="none" stroke-linecap="round" stroke-linejoin="round" opacity="1"/>
<path d="M309.0 709.0L314.0 707.0L318.0 709.5" stroke="#fffff0" stroke-width="1.02" fill="none" stroke-linecap="round" stroke-linejoin="round" opacity="1"/>
<path d="M324.0 703.0L328.0 708.0L331.0 714.0L334.0 716.0" stroke="#fffff0" stroke-width="1.10" fill="none" stroke-linecap="round" stroke-linejoin="round" opacity="1"/>
<path d="M326.0 704.0L331.0 706.0L335.0 711.0" stroke="#e8e0a0" stroke-width="0.85" fill="none" stroke-linecap="round" stroke-linejoin="round" opacity="1"/>
<path d="M336.0 705.0L341.0 705.0" stroke="#fffff0" stroke-width="0.85" fill="none" stroke-linecap="round" stroke-linejoin="round" opacity="1"/>
<path d="M341.0 711.0L346.0 707.5L350.0 706.0" stroke="#fffff0" stroke-width="1.19" fill="none" stroke-linecap="round" stroke-linejoin="round" opacity="1"/>
<path d="M343.0 713.0L349.0 711.0L354.0 714.0" stroke="#f0e8b0" stroke-width="0.94" fill="none" stroke-linecap="round" stroke-linejoin="round" opacity="1"/>
<path d="M321.0 714.0L330.0 717.5L340.0 717.0L352.0 718.0" stroke="#fffff0" stroke-width="1.36" fill="none" stroke-linecap="round" stroke-linejoin="round" opacity="1"/>
<path d="M304.0 721.0L330.0 720.0L360.0 721.0" stroke="#c8be70" stroke-width="0.85" fill="none" stroke-linecap="round" stroke-linejoin="round" opacity="1"/>
<path d="M352.0 704.0L356.0 709.0L358.0 716.0" stroke="#d8d090" stroke-width="0.85" fill="none" stroke-linecap="round" stroke-linejoin="round" opacity="1"/>
<path d="M385.0 641.0L390.0 645.5L396.0 648.0" stroke="#e8dfa0" stroke-width="0.94" fill="none" stroke-linecap="round" stroke-linejoin="round" opacity="1"/>
<path d="M396.0 648.0L400.0 644.0L403.0 640.5" stroke="#fffff0" stroke-width="1.10" fill="none" stroke-linecap="round" stroke-linejoin="round" opacity="1"/>
<path d="M401.0 646.0L404.0 648.0" stroke="#fffff0" stroke-width="1.19" fill="none" stroke-linecap="round" stroke-linejoin="round" opacity="1"/>
<path d="M404.0 642.0L412.0 638.5" stroke="#d8cf90" stroke-width="0.77" fill="none" stroke-linecap="round" stroke-linejoin="round" opacity="1"/>
<path d="M381.0 715.0L386.0 706.0L394.0 700.0L402.0 697.0" stroke="#f4ecb0" stroke-width="1.02" fill="none" stroke-linecap="round" stroke-linejoin="round" opacity="1"/>
<path d="M402.0 697.0L401.0 703.0L398.0 707.0" stroke="#fffff0" stroke-width="1.02" fill="none" stroke-linecap="round" stroke-linejoin="round" opacity="1"/>
<path d="M413.0 694.0L420.0 698.0L426.0 704.0L430.0 710.0" stroke="#fffff0" stroke-width="1.10" fill="none" stroke-linecap="round" stroke-linejoin="round" opacity="1"/>
<path d="M390.0 704.0L396.0 702.0" stroke="#fffff0" stroke-width="1.02" fill="none" stroke-linecap="round" stroke-linejoin="round" opacity="1"/>
<path d="M395.0 709.0L402.0 707.0L408.0 708.5L415.0 707.0" stroke="#fffff0" stroke-width="1.53" fill="none" stroke-linecap="round" stroke-linejoin="round" opacity="1"/>
<path d="M399.0 712.5L410.0 712.0L420.0 711.0" stroke="#fffff0" stroke-width="1.70" fill="none" stroke-linecap="round" stroke-linejoin="round" opacity="1"/>
<path d="M386.0 713.0L396.0 711.0" stroke="#f0e8c0" stroke-width="1.10" fill="none" stroke-linecap="round" stroke-linejoin="round" opacity="1"/>
<path d="M424.0 708.0L428.0 711.0" stroke="#fffff0" stroke-width="1.19" fill="none" stroke-linecap="round" stroke-linejoin="round" opacity="1"/>
<path d="M405.0 700.0L409.0 704.0L412.0 708.0" stroke="#e8e0a8" stroke-width="0.85" fill="none" stroke-linecap="round" stroke-linejoin="round" opacity="1"/>
<path d="M452.0 633.0L460.0 633.2L468.0 634.5L478.0 636.5" stroke="#e0d890" stroke-width="1.02" fill="none" stroke-linecap="round" stroke-linejoin="round" opacity="1"/>
<path d="M452.0 633.0L457.0 633.0" stroke="#fffff0" stroke-width="1.02" fill="none" stroke-linecap="round" stroke-linejoin="round" opacity="1"/>
<path d="M450.0 702.0L458.0 701.5" stroke="#fffff0" stroke-width="1.27" fill="none" stroke-linecap="round" stroke-linejoin="round" opacity="1"/>
<path d="M464.0 702.0L474.0 702.0" stroke="#fffff0" stroke-width="1.19" fill="none" stroke-linecap="round" stroke-linejoin="round" opacity="1"/>
<path d="M479.0 702.0L487.0 701.0L491.0 698.0L493.0 695.0" stroke="#fffff0" stroke-width="1.19" fill="none" stroke-linecap="round" stroke-linejoin="round" opacity="1"/>
<path d="M446.0 711.5L470.0 710.5L500.0 711.5" stroke="#c8be70" stroke-width="0.77" fill="none" stroke-linecap="round" stroke-linejoin="round" opacity="1"/>
<path d="M308.0 742.0L314.0 743.0L320.0 742.5L324.0 745.0" stroke="#fffff0" stroke-width="1.02" fill="none" stroke-linecap="round" stroke-linejoin="round" opacity="1"/>
<path d="M330.0 746.0L338.0 745.5L344.0 744.0" stroke="#e8e0a0" stroke-width="1.02" fill="none" stroke-linecap="round" stroke-linejoin="round" opacity="1"/>
<path d="M338.0 745.5L344.0 744.0" stroke="#fffff0" stroke-width="1.10" fill="none" stroke-linecap="round" stroke-linejoin="round" opacity="1"/>
<path d="M305.0 814.0L312.0 813.0L320.0 815.0L327.0 812.0L333.0 810.5L340.0 812.0L346.0 811.0" stroke="#fffff0" stroke-width="1.02" fill="none" stroke-linecap="round" stroke-linejoin="round" opacity="1"/>
<path d="M316.0 807.0L322.0 806.5" stroke="#e8e0a0" stroke-width="0.77" fill="none" stroke-linecap="round" stroke-linejoin="round" opacity="1"/>
<path d="M298.0 824.0L310.0 822.0L322.0 822.5" stroke="#e8e0a0" stroke-width="1.10" fill="none" stroke-linecap="round" stroke-linejoin="round" opacity="1"/>
<path d="M322.0 822.5L336.0 823.5L348.0 825.0L354.0 826.0" stroke="#fffff0" stroke-width="1.36" fill="none" stroke-linecap="round" stroke-linejoin="round" opacity="1"/>
<path d="M314.0 822.0L322.0 824.5" stroke="#fffff0" stroke-width="1.10" fill="none" stroke-linecap="round" stroke-linejoin="round" opacity="1"/>
<path d="M384.0 759.0L390.0 759.5" stroke="#fffff0" stroke-width="0.94" fill="none" stroke-linecap="round" stroke-linejoin="round" opacity="1"/>
<path d="M396.0 760.0L404.0 760.5L410.0 761.0" stroke="#fffff0" stroke-width="1.27" fill="none" stroke-linecap="round" stroke-linejoin="round" opacity="1"/>
<path d="M412.0 761.0L418.0 760.0" stroke="#e8e0a0" stroke-width="0.85" fill="none" stroke-linecap="round" stroke-linejoin="round" opacity="1"/>
<path d="M386.0 826.0L394.0 826.0L402.0 828.0L408.0 829.0" stroke="#f0e8b0" stroke-width="1.10" fill="none" stroke-linecap="round" stroke-linejoin="round" opacity="1"/>
<path d="M414.0 829.5L418.0 832.0L422.0 835.0" stroke="#fffff0" stroke-width="0.94" fill="none" stroke-linecap="round" stroke-linejoin="round" opacity="1"/>
<path d="M380.0 839.0L392.0 839.5L404.0 840.5L412.0 840.0" stroke="#e8e0a0" stroke-width="1.02" fill="none" stroke-linecap="round" stroke-linejoin="round" opacity="1"/>
<path d="M460.0 757.5L468.0 757.5" stroke="#fffff0" stroke-width="1.27" fill="none" stroke-linecap="round" stroke-linejoin="round" opacity="1"/>
<path d="M472.0 757.5L478.0 756.0L486.0 755.5" stroke="#f0e8b0" stroke-width="1.10" fill="none" stroke-linecap="round" stroke-linejoin="round" opacity="1"/>
<path d="M450.0 823.5L458.0 822.5" stroke="#fffff0" stroke-width="1.02" fill="none" stroke-linecap="round" stroke-linejoin="round" opacity="1"/>
<path d="M474.0 823.0L486.0 822.5L492.0 826.0" stroke="#e8e0a0" stroke-width="0.94" fill="none" stroke-linecap="round" stroke-linejoin="round" opacity="1"/>
<path d="M447.0 830.0L458.0 830.0L470.0 829.5L484.0 830.0L494.0 831.0" stroke="#f0e8b0" stroke-width="1.10" fill="none" stroke-linecap="round" stroke-linejoin="round" opacity="1"/>
<path d="M448.0 835.0L460.0 835.5L470.0 836.0L482.0 835.0" stroke="#fffff0" stroke-width="1.02" fill="none" stroke-linecap="round" stroke-linejoin="round" opacity="1"/>
<path d="M296.5 858.0L299.0 862.0L302.0 868.0" stroke="#f0e8b0" stroke-width="1.02" fill="none" stroke-linecap="round" stroke-linejoin="round" opacity="1"/>
<path d="M307.0 865.0L313.0 864.5L319.0 864.0" stroke="#fffff0" stroke-width="1.10" fill="none" stroke-linecap="round" stroke-linejoin="round" opacity="1"/>
<path d="M331.0 864.0L337.0 863.5L342.0 861.0L346.0 858.0" stroke="#fffff0" stroke-width="1.19" fill="none" stroke-linecap="round" stroke-linejoin="round" opacity="1"/>
<path d="M305.0 932.0L310.0 932.5L320.0 930.0L330.0 928.5L336.0 930.0" stroke="#fffff0" stroke-width="1.02" fill="none" stroke-linecap="round" stroke-linejoin="round" opacity="1"/>
<path d="M338.0 925.0L341.0 926.0L340.0 930.0" stroke="#fffff0" stroke-width="1.02" fill="none" stroke-linecap="round" stroke-linejoin="round" opacity="1"/>
<path d="M308.0 944.0L320.0 943.5" stroke="#e8e0a0" stroke-width="0.85" fill="none" stroke-linecap="round" stroke-linejoin="round" opacity="1"/>
<path d="M338.0 941.0L346.0 942.0L352.0 941.0" stroke="#fffff0" stroke-width="1.27" fill="none" stroke-linecap="round" stroke-linejoin="round" opacity="1"/>
<rect x="344.9" y="707.6" width="2.5" height="1.4" fill="#fbf7d0" opacity="0.74" transform="rotate(22 346.1 708.3)"/>
<rect x="331.6" y="708.4" width="2.6" height="1.4" fill="#f4f4e4" opacity="0.91" transform="rotate(-6 332.9 709.1)"/>
<rect x="332.1" y="708.6" width="2.0" height="1.6" fill="#ffffff" opacity="0.92" transform="rotate(-16 333.0 709.5)"/>
<rect x="347.6" y="707.2" width="1.6" height="1.5" fill="#fbf7d0" opacity="0.75" transform="rotate(2 348.4 707.9)"/>
<rect x="321.3" y="715.0" width="2.8" height="1.6" fill="#fbf7d0" opacity="0.68" transform="rotate(-10 322.7 715.8)"/>
<rect x="322.4" y="713.9" width="4.2" height="0.9" fill="#f4f4e4" opacity="0.68" transform="rotate(7 324.5 714.3)"/>
<rect x="344.7" y="709.2" width="3.6" height="1.5" fill="#e6e6c8" opacity="0.92" transform="rotate(20 346.5 709.9)"/>
<rect x="331.6" y="707.9" width="4.4" height="1.7" fill="#fbf7d0" opacity="0.93" transform="rotate(-0 333.8 708.7)"/>
<rect x="323.4" y="711.7" width="1.6" height="1.9" fill="#e6e6c8" opacity="0.95" transform="rotate(24 324.2 712.7)"/>
<rect x="344.1" y="714.6" width="4.2" height="2.1" fill="#fbf7d0" opacity="0.78" transform="rotate(7 346.2 715.7)"/>
<rect x="320.2" y="704.5" width="4.3" height="2.1" fill="#f4f4e4" opacity="1.00" transform="rotate(-13 322.3 705.5)"/>
<rect x="332.2" y="705.6" width="2.1" height="1.4" fill="#ffffff" opacity="0.82" transform="rotate(-10 333.3 706.3)"/>
<rect x="342.9" y="707.2" width="2.0" height="2.1" fill="#d8dcc0" opacity="0.66" transform="rotate(21 343.9 708.2)"/>
<rect x="335.2" y="714.7" width="2.4" height="1.1" fill="#fbf7d0" opacity="0.73" transform="rotate(-7 336.4 715.2)"/>
<rect x="415.5" y="708.6" width="2.9" height="1.1" fill="#f4f4e4" opacity="0.97" transform="rotate(-11 417.0 709.1)"/>
<rect x="421.1" y="708.7" width="5.8" height="1.6" fill="#d8dcc0" opacity="0.96" transform="rotate(18 424.0 709.5)"/>
<rect x="421.2" y="705.0" width="4.2" height="2.1" fill="#f4f4e4" opacity="0.79" transform="rotate(-1 423.3 706.1)"/>
<rect x="398.4" y="702.5" width="5.2" height="2.2" fill="#e6e6c8" opacity="0.93" transform="rotate(15 401.0 703.6)"/>
<rect x="393.1" y="712.1" width="5.6" height="2.0" fill="#d8dcc0" opacity="0.93" transform="rotate(20 395.9 713.1)"/>
<rect x="415.5" y="708.8" width="2.6" height="1.0" fill="#e6e6c8" opacity="0.97" transform="rotate(-9 416.8 709.3)"/>
<rect x="417.4" y="702.7" width="5.0" height="1.7" fill="#ffffff" opacity="0.70" transform="rotate(1 419.9 703.6)"/>
<rect x="416.0" y="701.0" width="5.3" height="2.0" fill="#ffffff" opacity="0.77" transform="rotate(16 418.7 702.0)"/>
<rect x="410.9" y="707.4" width="5.6" height="1.8" fill="#fbf7d0" opacity="0.84" transform="rotate(-21 413.7 708.3)"/>
<rect x="408.8" y="701.7" width="2.8" height="1.1" fill="#d8dcc0" opacity="0.72" transform="rotate(9 410.2 702.2)"/>
<rect x="410.1" y="707.3" width="2.6" height="2.0" fill="#e6e6c8" opacity="0.79" transform="rotate(-9 411.4 708.3)"/>
<rect x="409.5" y="713.5" width="4.7" height="0.9" fill="#f4f4e4" opacity="0.69" transform="rotate(-21 411.8 714.0)"/>
<rect x="403.7" y="706.6" width="5.9" height="2.0" fill="#ffffff" opacity="0.95" transform="rotate(8 406.6 707.5)"/>
<rect x="415.2" y="707.2" width="3.2" height="1.0" fill="#f4f4e4" opacity="0.97" transform="rotate(14 416.8 707.7)"/>
<rect x="396.0" y="708.6" width="5.7" height="1.8" fill="#d8dcc0" opacity="0.84" transform="rotate(23 398.9 709.5)"/>
<rect x="395.0" y="703.8" width="3.5" height="1.0" fill="#e6e6c8" opacity="0.85" transform="rotate(-10 396.8 704.3)"/>
<rect x="414.5" y="705.5" width="5.3" height="0.9" fill="#ffffff" opacity="0.70" transform="rotate(-18 417.2 706.0)"/>
<rect x="412.8" y="703.7" width="2.8" height="0.9" fill="#ffffff" opacity="0.69" transform="rotate(-2 414.2 704.2)"/>
<rect x="393.2" y="712.9" width="3.7" height="1.9" fill="#d8dcc0" opacity="0.97" transform="rotate(-8 395.0 713.8)"/>
<rect x="397.2" y="703.6" width="2.6" height="1.8" fill="#d8dcc0" opacity="0.87" transform="rotate(-1 398.4 704.5)"/>
<rect x="415.6" y="708.4" width="3.3" height="1.9" fill="#fbf7d0" opacity="0.84" transform="rotate(-13 417.3 709.4)"/>
<rect x="400.7" y="703.6" width="3.2" height="1.4" fill="#f4f4e4" opacity="0.83" transform="rotate(3 402.3 704.3)"/>
<rect x="393.4" y="713.3" width="3.3" height="1.0" fill="#e6e6c8" opacity="0.84" transform="rotate(13 395.0 713.8)"/>
<rect x="388.0" y="710.6" width="1.9" height="1.8" fill="#fbf7d0" opacity="1.00" transform="rotate(24 388.9 711.5)"/>
<rect x="392.3" y="714.1" width="3.2" height="0.8" fill="#ffffff" opacity="0.70" transform="rotate(8 393.9 714.6)"/>
<rect x="389.4" y="710.5" width="2.5" height="0.9" fill="#e6e6c8" opacity="0.81" transform="rotate(19 390.7 710.9)"/>
<rect x="384.8" y="713.8" width="1.9" height="2.1" fill="#fbf7d0" opacity="0.67" transform="rotate(2 385.7 714.8)"/>
<rect x="357.1" y="727.0" width="3.4" height="2.1" fill="#f4f4e4" opacity="0.69" transform="rotate(-8 358.8 728.0)"/>
<rect x="355.7" y="728.2" width="3.7" height="1.1" fill="#f4f4e4" opacity="0.71" transform="rotate(4 357.5 728.7)"/>
<rect x="352.9" y="726.9" width="1.6" height="1.1" fill="#f4f4e4" opacity="0.76" transform="rotate(24 353.7 727.5)"/>
<rect x="354.2" y="730.6" width="2.5" height="1.6" fill="#ffffff" opacity="0.71" transform="rotate(15 355.4 731.4)"/>
<rect x="350.4" y="726.7" width="2.8" height="1.0" fill="#e6e6c8" opacity="0.83" transform="rotate(-5 351.8 727.2)"/>
<rect x="384.1" y="726.8" width="3.3" height="1.7" fill="#f4f4e4" opacity="0.79" transform="rotate(-23 385.8 727.7)"/>
<rect x="389.3" y="722.0" width="3.4" height="2.1" fill="#fbf7d0" opacity="0.92" transform="rotate(21 390.9 723.0)"/>
<rect x="393.5" y="725.9" width="6.0" height="2.0" fill="#d8dcc0" opacity="0.94" transform="rotate(18 396.5 726.9)"/>
<rect x="379.7" y="722.5" width="5.8" height="1.3" fill="#d8dcc0" opacity="0.97" transform="rotate(1 382.6 723.1)"/>
<rect x="384.6" y="721.5" width="4.9" height="2.1" fill="#fbf7d0" opacity="0.76" transform="rotate(12 387.1 722.5)"/>
<rect x="394.6" y="730.3" width="5.5" height="1.1" fill="#f4f4e4" opacity="0.83" transform="rotate(17 397.4 730.8)"/>
<rect x="386.3" y="721.8" width="4.8" height="1.5" fill="#e6e6c8" opacity="0.88" transform="rotate(-13 388.7 722.5)"/>
<rect x="397.7" y="729.9" width="6.0" height="1.8" fill="#e6e6c8" opacity="0.95" transform="rotate(19 400.7 730.8)"/>
<rect x="387.8" y="729.1" width="2.9" height="1.8" fill="#ffffff" opacity="0.68" transform="rotate(3 389.3 730.1)"/>
<rect x="395.4" y="722.2" width="4.2" height="2.1" fill="#f4f4e4" opacity="0.90" transform="rotate(-25 397.4 723.2)"/>
<rect x="406.7" y="723.0" width="3.8" height="1.4" fill="#f4f4e4" opacity="0.77" transform="rotate(2 408.6 723.7)"/>
<rect x="421.0" y="721.4" width="2.1" height="2.1" fill="#d8dcc0" opacity="0.70" transform="rotate(-10 422.1 722.5)"/>
<rect x="423.9" y="729.2" width="5.5" height="1.1" fill="#ffffff" opacity="0.72" transform="rotate(18 426.6 729.8)"/>
<rect x="426.2" y="725.0" width="3.9" height="1.0" fill="#fbf7d0" opacity="0.72" transform="rotate(19 428.1 725.5)"/>
<rect x="420.4" y="723.5" width="5.5" height="0.9" fill="#e6e6c8" opacity="0.99" transform="rotate(-20 423.2 723.9)"/>
<rect x="411.8" y="725.6" width="5.5" height="1.3" fill="#d8dcc0" opacity="0.80" transform="rotate(23 414.6 726.2)"/>
<rect x="410.8" y="729.7" width="2.5" height="1.8" fill="#f4f4e4" opacity="0.83" transform="rotate(-12 412.1 730.6)"/>
<rect x="412.5" y="724.0" width="5.2" height="1.5" fill="#fbf7d0" opacity="0.73" transform="rotate(-19 415.1 724.7)"/>
<rect x="412.9" y="730.7" width="4.7" height="1.2" fill="#ffffff" opacity="0.81" transform="rotate(7 415.2 731.3)"/>
<rect x="408.7" y="730.1" width="2.3" height="2.1" fill="#fbf7d0" opacity="0.75" transform="rotate(-25 409.8 731.2)"/>
<rect x="412.8" y="729.4" width="2.3" height="1.2" fill="#f4f4e4" opacity="0.71" transform="rotate(13 414.0 730.0)"/>
<rect x="423.0" y="721.8" width="5.2" height="1.0" fill="#fbf7d0" opacity="0.81" transform="rotate(20 425.6 722.3)"/>
<rect x="455.9" y="722.3" width="4.8" height="1.5" fill="#fbf7d0" opacity="0.92" transform="rotate(-16 458.3 723.0)"/>
<rect x="458.9" y="721.7" width="3.5" height="0.8" fill="#fbf7d0" opacity="0.91" transform="rotate(-10 460.6 722.2)"/>
<rect x="452.8" y="725.2" width="4.3" height="1.0" fill="#d8dcc0" opacity="0.84" transform="rotate(-3 455.0 725.7)"/>
<rect x="448.8" y="726.7" width="4.2" height="1.2" fill="#fbf7d0" opacity="0.86" transform="rotate(2 450.8 727.3)"/>
<rect x="448.5" y="720.2" width="4.9" height="0.9" fill="#f4f4e4" opacity="0.76" transform="rotate(-3 450.9 720.6)"/>
<rect x="453.9" y="725.2" width="4.4" height="1.5" fill="#ffffff" opacity="0.68" transform="rotate(11 456.1 725.9)"/>
<rect x="458.8" y="724.4" width="3.6" height="1.9" fill="#f4f4e4" opacity="0.67" transform="rotate(-13 460.6 725.4)"/>
<rect x="451.2" y="726.1" width="4.5" height="1.8" fill="#fbf7d0" opacity="0.82" transform="rotate(14 453.4 727.0)"/>
<rect x="487.7" y="726.1" width="3.5" height="1.1" fill="#fbf7d0" opacity="0.93" transform="rotate(-0 489.5 726.6)"/>
<rect x="470.1" y="724.8" width="3.5" height="1.1" fill="#ffffff" opacity="0.69" transform="rotate(24 471.8 725.3)"/>
<rect x="491.4" y="726.9" width="2.5" height="1.8" fill="#ffffff" opacity="0.65" transform="rotate(1 492.7 727.8)"/>
<rect x="481.1" y="726.0" width="2.4" height="1.6" fill="#ffffff" opacity="0.99" transform="rotate(-1 482.3 726.8)"/>
<rect x="487.4" y="728.5" width="5.9" height="1.7" fill="#ffffff" opacity="0.84" transform="rotate(-10 490.4 729.3)"/>
<rect x="474.4" y="725.3" width="5.7" height="1.3" fill="#fbf7d0" opacity="0.73" transform="rotate(-8 477.3 726.0)"/>
<rect x="471.8" y="726.7" width="6.0" height="1.8" fill="#fbf7d0" opacity="0.97" transform="rotate(3 474.8 727.6)"/>
<rect x="472.4" y="730.6" width="5.7" height="1.1" fill="#ffffff" opacity="0.73" transform="rotate(-6 475.3 731.2)"/>
<rect x="478.3" y="721.9" width="4.2" height="1.0" fill="#f4f4e4" opacity="0.86" transform="rotate(-15 480.4 722.4)"/>
<rect x="490.8" y="725.3" width="4.0" height="1.7" fill="#d8dcc0" opacity="0.72" transform="rotate(-16 492.8 726.1)"/>
<rect x="479.1" y="720.3" width="4.8" height="1.3" fill="#ffffff" opacity="0.83" transform="rotate(-11 481.5 720.9)"/>
<rect x="490.1" y="725.8" width="4.3" height="1.7" fill="#ffffff" opacity="0.78" transform="rotate(-14 492.2 726.7)"/>
<rect x="472.9" y="731.2" width="3.4" height="1.9" fill="#ffffff" opacity="0.66" transform="rotate(11 474.6 732.2)"/>
<rect x="478.5" y="724.0" width="2.3" height="2.0" fill="#fbf7d0" opacity="0.88" transform="rotate(-9 479.7 725.0)"/>
<rect x="302.9" y="840.6" width="3.5" height="1.1" fill="#f4f4e4" opacity="0.66" transform="rotate(1 304.6 841.1)"/>
<rect x="303.1" y="837.9" width="3.6" height="1.0" fill="#e6e6c8" opacity="0.76" transform="rotate(10 304.9 838.4)"/>
<rect x="305.6" y="836.7" width="4.6" height="2.0" fill="#d8dcc0" opacity="0.79" transform="rotate(2 307.9 837.7)"/>
<rect x="305.2" y="844.4" width="2.7" height="1.2" fill="#f4f4e4" opacity="0.70" transform="rotate(-8 306.5 845.0)"/>
<rect x="314.9" y="842.8" width="3.4" height="0.8" fill="#e6e6c8" opacity="0.88" transform="rotate(13 316.7 843.2)"/>
<rect x="297.6" y="844.1" width="3.7" height="1.3" fill="#e6e6c8" opacity="0.73" transform="rotate(-19 299.5 844.8)"/>
<rect x="310.3" y="832.7" width="3.3" height="1.3" fill="#d8dcc0" opacity="0.98" transform="rotate(-22 311.9 833.3)"/>
<rect x="302.9" y="841.5" width="2.7" height="2.1" fill="#f4f4e4" opacity="0.77" transform="rotate(-15 304.3 842.6)"/>
<rect x="311.6" y="838.8" width="4.2" height="2.1" fill="#d8dcc0" opacity="0.85" transform="rotate(15 313.7 839.8)"/>
<rect x="311.4" y="839.9" width="4.1" height="0.8" fill="#e6e6c8" opacity="0.97" transform="rotate(-5 313.4 840.3)"/>
<rect x="309.5" y="958.7" width="2.4" height="2.0" fill="#e6e6c8" opacity="0.96" transform="rotate(-10 310.7 959.7)"/>
<rect x="296.9" y="956.7" width="2.3" height="1.3" fill="#f4f4e4" opacity="0.87" transform="rotate(-10 298.1 957.4)"/>
<rect x="300.9" y="960.0" width="3.7" height="0.8" fill="#f4f4e4" opacity="0.92" transform="rotate(10 302.8 960.4)"/>
<rect x="305.1" y="962.5" width="2.5" height="1.4" fill="#d8dcc0" opacity="0.96" transform="rotate(-11 306.4 963.2)"/>
<rect x="301.9" y="965.6" width="1.6" height="1.0" fill="#e6e6c8" opacity="0.82" transform="rotate(0 302.7 966.1)"/>
<rect x="302.6" y="956.6" width="3.0" height="1.2" fill="#f4f4e4" opacity="0.73" transform="rotate(-12 304.1 957.2)"/>
</g>
<path d="M463.6 655.4L471.0 655.4L478.4 662.8L480.5 667.0L482.5 670.0L482.7 683.4L474.1 683.4L466.7 682.0L463.6 678.3z" fill="#3c3a10" stroke="#e8e8e8" stroke-width="1" stroke-linejoin="round"/>
<path d="M465.5 657.5L471.4 657.5L477.4 663.8L479.0 667.4L480.6 670.0L480.8 681.6L473.9 681.6L468.0 680.3L465.5 677.2z" fill="none" stroke="#0c0c06" stroke-width="1" stroke-linejoin="round"/>
</svg>
<!-- ===== right properties panel ===== -->
<div class="a" style="left:765px;top:88px;width:5px;height:924px;background:#fff"></div>
<div class="a" style="left:770px;top:40px;width:190px;height:1px;background:#696969"></div>
<div class="a" style="left:770px;top:40px;width:1px;height:972px;background:#696969"></div>
<div class="a" style="left:771px;top:40px;width:1px;height:30px;background:#696969"></div>
<div class="a" style="left:772px;top:72px;width:188px;height:2px;background:#f0f0f0"></div>
<div class="a" style="left:771px;top:74px;width:189px;height:938px;background:#f0f0f0;border-top:1px solid #696969;border-left:1px solid #696969"></div>
<!-- header -->
<svg class="a" style="left:776px;top:44px" width="50" height="24" viewBox="776 44 50 24" fill="none">
<path d="M780.100 62.800L786.300 56.500L782.400 53.100L786.600 52.300L789.300 49.400L790.700 47.300L795.900 52L794 53.600L791.700 55.900L792.100 60.200L787.400 57.600z" fill="#333" stroke="#333" stroke-width="0.500" stroke-linejoin="round"/>
<g fill="#222"><rect x="801" y="48" width="2" height="17"/><rect x="801" y="63" width="20" height="2"/>
<rect x="805" y="49" width="2" height="2"/><rect x="812" y="49" width="2" height="2"/><rect x="808" y="52" width="2" height="2"/>
<rect x="805" y="55" width="2" height="2"/><rect x="818" y="54" width="2" height="2"/><rect x="815" y="57" width="2" height="2"/><rect x="811" y="60" width="2" height="2"/></g>
<path d="M803 63L818.300 50.700" stroke="#222" stroke-width="1.300"/>
</svg>
<div class="t" style="left:825px;top:49px">Spectral (X Training) - D...</div>

<!-- X-axis labels -->
<div class="grp" style="top:81px;height:36px"><span class="gl">X-axis labels</span></div>
<div class="t" style="left:780px;top:96px">By:</div>
<div class="cb" style="left:802px;top:92px;width:133px;height:19px"></div>
<div class="cbb" style="left:915px;top:94px;width:19px;height:16px"></div>
<div class="ab" style="left:934px;top:92px;height:18px;border-top:2px solid #696969"></div>
<div class="t" style="left:807px;top:96px">VarID 1</div>

<!-- Color -->
<div class="grp" style="top:126px;height:52px"><span class="gl">Color</span></div>
<div class="t" style="left:780px;top:141px">By:</div>
<div class="cb" style="left:802px;top:137px;width:133px;height:19px"></div>
<div class="cbb" style="left:915px;top:139px;width:19px;height:16px"></div>
<div class="ab" style="left:934px;top:137px;height:18px;border-top:2px solid #696969"></div>
<div class="t" style="left:807px;top:141px">[FIXED]</div>
<div class="t" style="left:802px;top:161px">Color:</div>
<div class="a" style="left:837px;top:160px;width:35px;height:12px;background:#ed1c24;border:1px solid #000"></div>

<!-- Lines -->
<div class="grp" style="top:187px;height:80px"><span class="gl">Lines</span></div>
<div class="t" style="left:780px;top:202px">By:</div>
<div class="cb" style="left:802px;top:198px;width:133px;height:19px;background:#f0f0f0"></div>
<div class="cbb" style="left:915px;top:200px;width:19px;height:16px;background:#cccccc"></div>
<div class="ab" style="left:934px;top:198px;height:18px;border-top:2px solid #696969"></div>
<div class="t" style="left:807px;top:202px;color:#6d6d6d">[INDEX]</div>
<div class="t" style="left:804px;top:225px">Style:</div>
<div class="cb" style="left:840px;top:221px;width:89px;height:21px"></div>
<div class="cbb" style="left:909px;top:223px;width:19px;height:18px"></div>
<div class="a" style="left:844px;top:234px;width:41px;height:1px;background:#000"></div>
<div class="t" style="left:802px;top:247px">Width:</div>
<div class="a" style="left:840px;top:244px;width:32px;height:18px;border:1px solid #7a7a7a;background:#fff"></div>
<div class="t" style="left:844px;top:247px">1</div>

<!-- Y axis -->
<div class="grp" style="top:277px;height:128px"><span class="gl">Y axis</span></div>
<svg class="a" style="left:786px;top:295px" width="18" height="46" viewBox="786 295 18 46">
<circle cx="794.500" cy="303.500" r="6" fill="#fff" stroke="#333" stroke-width="1"/><circle cx="794.500" cy="303.500" r="3.500" fill="#333"/>
<circle cx="794.500" cy="332.500" r="6" fill="#fff" stroke="#333" stroke-width="1"/>
</svg>
<div class="t" style="left:804px;top:297px">Dynamic</div>
<div class="t" style="left:804px;top:326px">Fixed</div>
<div class="t" style="left:796px;top:354px">Max:</div>
<div class="sp" style="top:350px"></div>
<div class="t" style="left:918px;top:354px;color:#6d6d6d">-1</div>
<div class="t" style="left:798px;top:380px">Min:</div>
<div class="sp" style="top:376px"></div>
<div class="t" style="left:918px;top:380px;color:#6d6d6d">-1</div>
<svg class="a" style="left:931px;top:351px" width="16" height="45" viewBox="931 351 16 45">
<g fill="#f0f0f0" stroke="#dadada"><rect x="932.500" y="352.500" width="13" height="8"/><rect x="932.500" y="360.500" width="13" height="8"/><rect x="932.500" y="378.500" width="13" height="8"/><rect x="932.500" y="386.500" width="13" height="8"/></g>
<g fill="#555"><path d="M936 358h6l-3-3.400z"/><path d="M936 363h6l-3 3.400z"/><path d="M936 384h6l-3-3.400z"/><path d="M936 389h6l-3 3.400z"/></g>
</svg>

<!-- Spectra option -->
<div class="grp" style="top:414px;height:105px"><span class="gl">Spectra option</span></div>
<div class="chk" style="top:435px"></div>
<div class="chk" style="top:464px"></div>
<svg class="a" style="left:788px;top:435px" width="13" height="42" viewBox="0 0 13 42" fill="none"><path d="M2.500 6.500l3 3l5-6" stroke="#222" stroke-width="1.200"/><path d="M2.500 35.500l3 3l5-6" stroke="#222" stroke-width="1.200"/></svg>
<div class="t" style="left:804px;top:435px">Show interaction spectra</div>
<div class="t" style="left:804px;top:464px">Add average from selection</div>
<div class="a" style="left:785px;top:489px;width:133px;height:20px;background:#e1e1e1;border:1px solid #adadad"></div>
<div class="t" style="left:799px;top:492px;letter-spacing:0.2px">Save spectral data...</div>

<!-- combobox chevrons and up-arrows -->
<svg class="a" style="left:905px;top:90px" width="50" height="155" viewBox="905 90 50 155" fill="none">
<g stroke="#444" stroke-width="1"><path d="M920.500 100.500l4 4l4-4"/><path d="M920.500 145.500l4 4l4-4"/><path d="M914.500 230.500l4 4l4-4"/></g>
<path d="M920.500 206.500l4 4l4-4" stroke="#aaa" stroke-width="1"/>
<g fill="#000"><path id="ua" d="M936 107.800c4.500-1.500 6.500-5 6.300-8.600l-3 .6L944 94l3.800 6.200l-2.600-.7c0 4.700-3.700 7.900-9.200 8.300z"/>
<path d="M936 152.800c4.500-1.500 6.500-5 6.300-8.600l-3 .6L944 139l3.800 6.200l-2.600-.7c0 4.700-3.700 7.900-9.200 8.300z"/>
<path d="M936 213.800c4.500-1.500 6.500-5 6.300-8.600l-3 .6L944 200l3.800 6.200l-2.600-.7c0 4.700-3.700 7.900-9.200 8.300z"/></g>
</svg>

<!-- hand-drawn red annotation -->
<svg class="a" style="left:760px;top:435px" width="210" height="60" viewBox="760 435 210 60" fill="none">
<path d="M898.600 455.400C903 449 908 444.600 918 442.600C930 440.400 946 442.500 955 446.500C962 449.600 967.500 452.500 969 460C970.500 469 970 478 963.500 483.400C954 487.500 940 486.600 928 486.800C900 487.400 870 487.200 846 487.200C828 487.200 812 487.400 800 486.400C790 485.600 782 485 776 481.400C770 478 768 474 768.400 469C769 463 774 461 782 459.400C794 457 806 456.400 816 454.800C828 452.600 836 449.600 846 447.800C856 446 866 445.800 876 447.200C884 448.400 892 450.400 897 452C901 453.200 904.500 453.600 907.200 453.400" stroke="#ed1c24" stroke-width="1.900" stroke-linecap="round" stroke-linejoin="round"/>
</svg>
</body></html>
